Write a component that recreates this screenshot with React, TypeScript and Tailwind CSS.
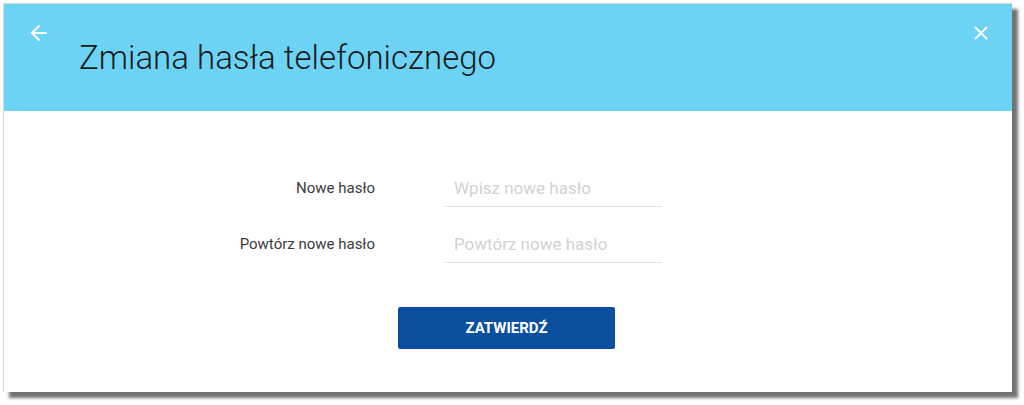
import { ArrowLeft, X } from 'lucide-react';

const fields = [
  { label: 'Nowe hasło', placeholder: 'Wpisz nowe hasło' },
  { label: 'Powtórz nowe hasło', placeholder: 'Powtórz nowe hasło' },
];

const App = () => {
  return (
    <div className="w-[1024px] h-[405px] bg-white pt-[3px] pl-[3px] font-['Roboto',sans-serif]">
      <div className="w-[1009px] h-[389px] bg-white border-l border-t border-[#d9d9d9] shadow-[6px_6px_3px_rgba(0,0,0,0.55)] flex flex-col">
        {/* header */}
        <div className="h-[107px] bg-[#6dd3f5] relative pl-[75px] pt-[32px]">
          <button className="absolute left-[23px] top-[17px] text-white" aria-label="Wstecz">
            <ArrowLeft size={24} strokeWidth={1.8} />
          </button>
          <button className="absolute right-[20px] top-[18px] text-white" aria-label="Zamknij">
            <X size={22} strokeWidth={2} />
          </button>
          <h1 className="text-[33px] leading-[44px] font-light text-[#1b1b1b]">Zmiana hasła telefonicznego</h1>
        </div>

        {/* form */}
        <div className="pt-[58px] flex flex-col gap-[18px]">
          {fields.map((f) => (
            <div key={f.label} className="flex items-center">
              <label className="w-[371px] text-right text-[15px] text-[#3a3a3a]">{f.label}</label>
              <input
                type="password"
                placeholder={f.placeholder}
                className="ml-[70px] w-[217px] h-[38px] border-b border-[#e3e3e3] px-[9px] text-[17px] text-[#333] placeholder:text-[#d2d2d2] outline-none"
              />
            </div>
          ))}
        </div>

        <div className="pt-[44px] pl-[394px]">
          <button className="w-[217px] h-[42px] bg-[#0b4fa0] rounded-[2px] text-white text-[15px] font-bold">
            ZATWIERDŹ
          </button>
        </div>
      </div>
    </div>
  );
};

export default App;
